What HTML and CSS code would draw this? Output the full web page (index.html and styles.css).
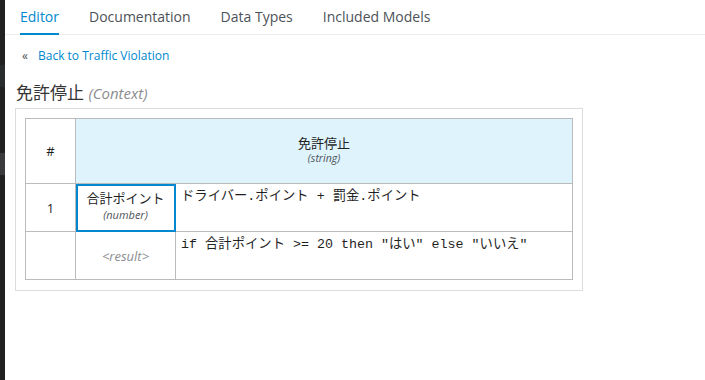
FILE: index.html
```html
<!DOCTYPE html>
<html>
<head>
<meta charset="utf-8">
<link rel="stylesheet" href="styles.css">
</head>
<body>
<div class="sidebar">
  <div class="sb-a"></div>
  <div class="sb-b"></div>
</div>
<div class="main">
  <nav class="tabs">
    <span class="tab active">Editor</span>
    <span class="tab">Documentation</span>
    <span class="tab">Data Types</span>
    <span class="tab">Included Models</span>
  </nav>
  <div class="content">
    <div class="back"><span class="raquo">«</span><span class="back-link">Back to Traffic Violation</span></div>
    <h1 class="title">免許停止 <span class="kind">(Context)</span></h1>
    <div class="box">
      <table class="grid">
        <colgroup>
          <col class="c-num">
          <col class="c-name">
          <col class="c-expr">
        </colgroup>
        <tr class="head">
          <th class="num">#</th>
          <th class="hdr" colspan="2">
            <div class="hname">免許停止</div>
            <div class="htype">(string)</div>
          </th>
        </tr>
        <tr class="row">
          <td class="num">1</td>
          <td class="name selected">
            <div class="vname">合計ポイント</div>
            <div class="vtype">(number)</div>
          </td>
          <td class="expr">ドライバー.ポイント + 罰金.ポイント</td>
        </tr>
        <tr class="row">
          <td class="num"></td>
          <td class="name result">&lt;result&gt;</td>
          <td class="expr">if 合計ポイント &gt;= 20 then "はい" else "いいえ"</td>
        </tr>
      </table>
    </div>
  </div>
</div>
</body>
</html>
```

FILE: styles.css
```css
* { box-sizing: border-box; }
html, body { margin: 0; padding: 0; height: 100%; }
body {
  display: flex;
  background: #fff;
  font-family: "Open Sans", "Noto Sans CJK JP", sans-serif;
  color: #363636;
}
.sidebar {
  width: 5px;
  background: #212121;
  display: flex;
  flex-direction: column;
}
.sb-a { margin-top: 65px; height: 22px; background: #292c2d; }
.sb-b { margin-top: 66px; height: 22px; background: #3a3a3c; }
.main { flex: 1; }
.tabs {
  display: flex;
  height: 35px;
  border-bottom: 1px solid #ececec;
}
.tab {
  margin: 0 15px;
  font-size: 14px;
  line-height: 34px;
  height: 35px;
  color: #4d5258;
}
.tab.active {
  color: #0088ce;
  border-bottom: 2px solid #0088ce;
  height: 35px;
  line-height: 34px;
}
.content { padding: 0 10px; }
.back {
  margin-top: 11px;
  height: 20px;
  font-size: 12px;
  line-height: 20px;
  padding-left: 7px;
  display: flex;
}
.raquo { color: #4d5258; width: 16px; font-size: 12px; }
.back-link { color: #0088ce; }
.title {
  margin: 15px 0 0 1px;
  font-size: 17px;
  font-weight: normal;
  line-height: 24px;
  color: #363636;
}
.kind { font-size: 15px; font-style: italic; color: #8b8d8f; }
.box {
  margin-top: 3px;
  width: 568px;
  border: 1px solid #dcdcdc;
  padding: 9px 9px 10px 9px;
}
.grid {
  border-collapse: collapse;
  table-layout: fixed;
  width: 548px;
}
.c-num { width: 50px; }
.c-name { width: 100px; }
.grid th, .grid td {
  border: 1px solid #bbb;
  padding: 0;
  font-weight: normal;
  font-size: 13px;
  color: #1f1f1f;
}
.head { height: 65px; }
.row { height: 48px; }
.num { text-align: center; font-size: 13px !important; }
.hdr { background: #def3fc; text-align: center; padding-bottom: 2px !important; }
.hname { font-size: 13px; line-height: 16px; }
.htype, .vtype { font-size: 11px; font-style: italic; color: #4d5258; line-height: 15px; }
.htype { font-size: 10.5px; }
.name { text-align: center; }
.selected { outline: 2px solid #0088ce; outline-offset: -2px; padding-bottom: 3px !important; }
.vname { font-size: 13px; line-height: 17px; }
.result { color: #8b8d8f !important; font-style: italic; font-size: 13px; }
.expr {
  vertical-align: top;
  font-family: "Liberation Mono", "Noto Sans CJK JP", monospace;
  font-size: 13.33px !important;
  padding: 4px 5px 0 5px !important;
  line-height: 18px;
  white-space: pre;
}
```
